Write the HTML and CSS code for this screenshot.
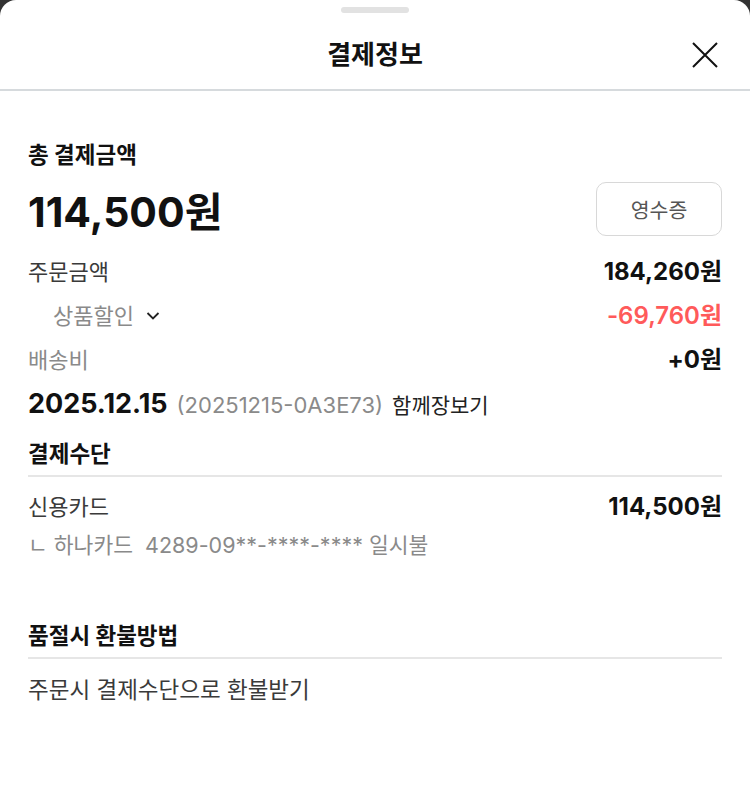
FILE: index.html
```html
<!DOCTYPE html>
<html lang="ko">
<head>
<meta charset="utf-8">
<link rel="stylesheet" href="styles.css">
</head>
<body>
<div class="sheet">
  <div class="handle-wrap"><div class="handle"></div></div>
  <header class="header">
    <h1 class="title">결제정보</h1>
    <button class="close" aria-label="닫기">
      <svg width="26" height="26" viewBox="0 0 26 26"><path d="M1 1 L25 25 M25 1 L1 25" stroke="#111" stroke-width="2" fill="none"/></svg>
    </button>
  </header>
  <main class="content">
    <section class="total">
      <div class="label-strong">총 결제금액</div>
      <div class="total-row">
        <div class="total-amount">114,500원</div>
        <button class="receipt">영수증</button>
      </div>
    </section>
    <div class="row first">
      <span class="k">주문금액</span>
      <span class="v">184,260원</span>
    </div>
    <div class="row sub">
      <span class="k muted">상품할인
        <svg class="chev" width="14" height="14" viewBox="0 0 14 14"><path d="M1.5 4 L7 9.5 L12.5 4" stroke="#222" stroke-width="1.8" fill="none"/></svg>
      </span>
      <span class="v red">-69,760원</span>
    </div>
    <div class="row">
      <span class="k muted">배송비</span>
      <span class="v">+0원</span>
    </div>
    <div class="date-row">
      <span class="date">2025.12.15</span>
      <span class="order-no">(20251215-0A3E73)</span>
      <span class="together">함께장보기</span>
    </div>

    <section class="section pay">
      <div class="label-strong sec-title">결제수단</div>
      <div class="row">
        <span class="k">신용카드</span>
        <span class="v">114,500원</span>
      </div>
      <div class="card-detail">ㄴ 하나카드&nbsp;&nbsp;4289-09**-****-**** 일시불</div>
    </section>

    <section class="section refund">
      <div class="label-strong sec-title">품절시 환불방법</div>
      <div class="plain">주문시 결제수단으로 환불받기</div>
    </section>
  </main>
</div>
</body>
</html>
```

FILE: styles.css
```css
* { box-sizing: border-box; }
html, body { margin: 0; padding: 0; }
body {
  background: #333;
  font-family: Inter, "Noto Sans CJK KR", "Noto Sans", sans-serif;
  color: #111;
  width: 750px;
  height: 810px;
  overflow: hidden;
}
.sheet {
  background: #fff;
  border-radius: 16px 16px 0 0;
  height: 810px;
}
.handle-wrap { display: flex; justify-content: center; padding-top: 7px; }
.handle { width: 68px; height: 6px; border-radius: 3px; background: #e2e2e2; }
.header {
  position: relative;
  height: 78px;
  padding-top: 8px;
  display: flex;
  align-items: center;
  justify-content: center;
  border-bottom: 2px solid #d6dadd;
}
.title { margin: 0; font-size: 26px; font-weight: 700; line-height: 34px; color: #111; }
.close {
  position: absolute;
  right: 32px;
  top: 29px;
  width: 26px; height: 26px;
  padding: 0; border: 0; background: none;
  display: flex;
}
.content { padding: 49px 28px 0 28px; }
.label-strong { font-size: 22.5px; font-weight: 700; line-height: 30px; color: #111; }
.total-row {
  display: flex; justify-content: space-between; align-items: center;
  margin-top: 12px;
}
.total-amount { font-size: 41px; font-weight: 700; line-height: 48px; padding-top: 6px; }
.receipt {
  width: 126px; height: 54px;
  border: 1.5px solid #d8d8d8; border-radius: 10px;
  background: #fff;
  font-family: inherit; font-size: 20.5px; color: #555;
}
.row {
  display: flex; justify-content: space-between; align-items: center;
  height: 44px;
}
.row.first { margin-top: 14px; }
.k { font-size: 22px; color: #3a3a3a; line-height: 30px; display: flex; align-items: center; }
.muted { color: #8a8a8a; }
.sub .k { padding-left: 25px; }
.chev { margin-left: 12px; }
.v { font-size: 24px; font-weight: 700; line-height: 30px; color: #111; }
.red { color: #ff5a5a; font-weight: 600; }
.date-row { display: flex; align-items: baseline; height: 44px; padding-top: 5px; }
.date { font-size: 27px; font-weight: 700; line-height: 34px; }
.order-no { font-size: 22px; color: #8a8a8a; margin-left: 9px; }
.together { font-size: 21px; color: #222; margin-left: 9px; }
.sec-title {
  padding-top: 13px;
  padding-bottom: 6px;
  border-bottom: 2px solid #e6e6e6;
}
.pay .row { margin-top: 8px; }
.card-detail { font-size: 21.5px; color: #8a8a8a; line-height: 30px; margin-top: 1px; }
.refund { margin-top: 61px; }
.refund .sec-title { padding-top: 0; }
.plain { font-size: 22.5px; color: #3a3a3a; line-height: 30px; margin-top: 16px; }
```
